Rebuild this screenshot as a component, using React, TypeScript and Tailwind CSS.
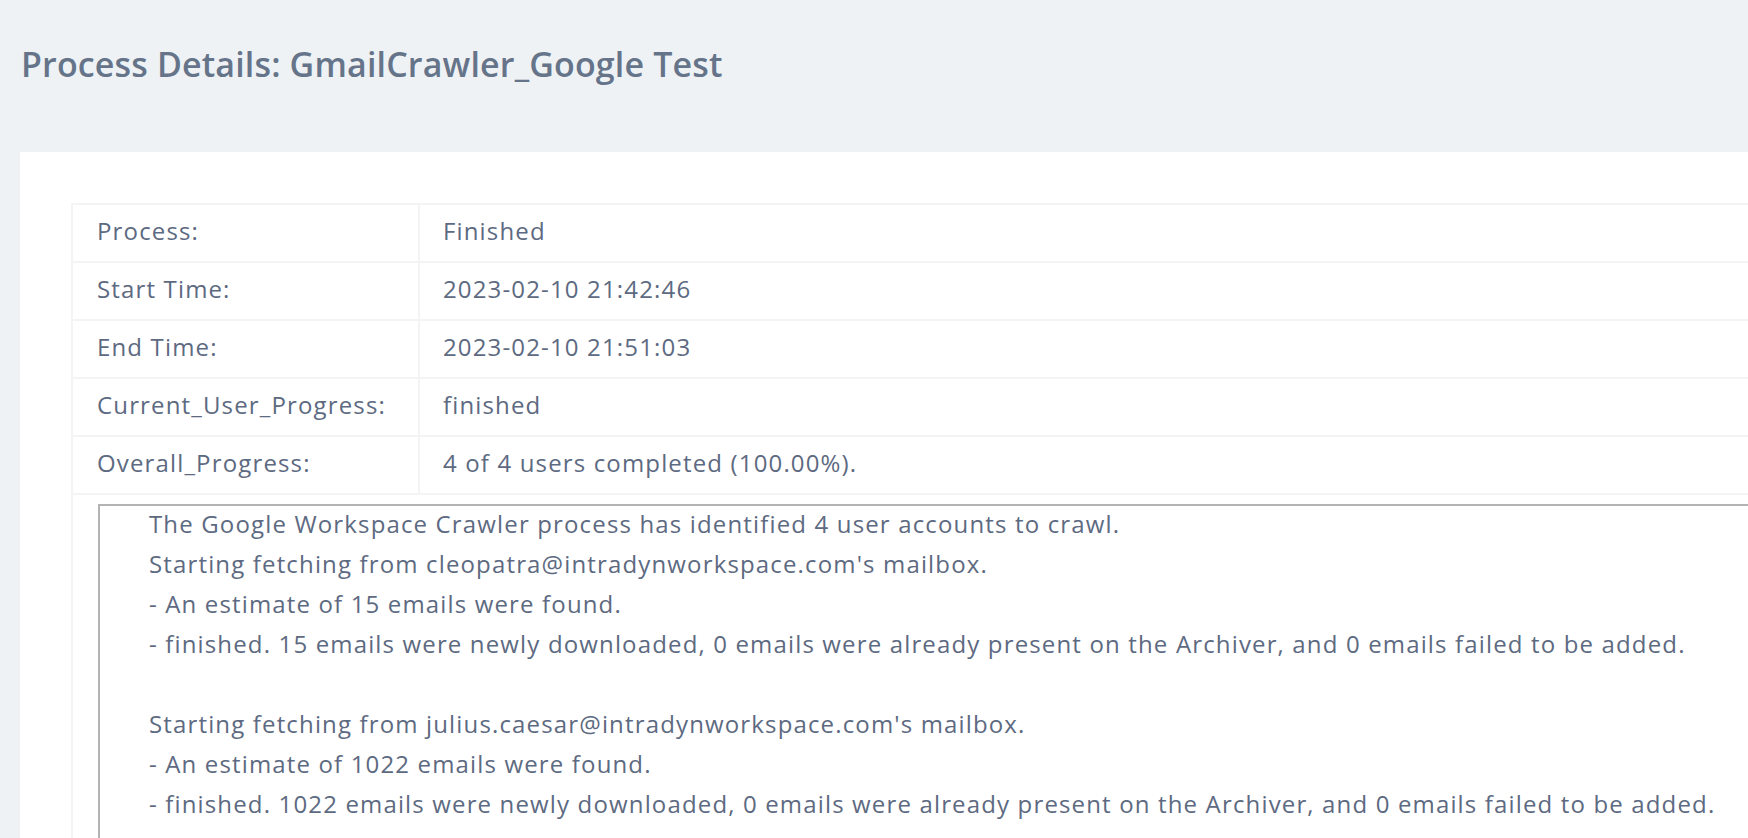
import React from "react";

const rows: { label: string; value: string }[] = [
  { label: "Process:", value: "Finished" },
  { label: "Start Time:", value: "2023-02-10 21:42:46" },
  { label: "End Time:", value: "2023-02-10 21:51:03" },
  { label: "Current_User_Progress:", value: "finished" },
  { label: "Overall_Progress:", value: "4 of 4 users completed (100.00%)." },
];

const logLines = [
  "The Google Workspace Crawler process has identified 4 user accounts to crawl.",
  "Starting fetching from cleopatra@intradynworkspace.com's mailbox.",
  "- An estimate of 15 emails were found.",
  "- finished. 15 emails were newly downloaded, 0 emails were already present on the Archiver, and 0 emails failed to be added.",
  "",
  "Starting fetching from julius.caesar@intradynworkspace.com's mailbox.",
  "- An estimate of 1022 emails were found.",
  "- finished. 1022 emails were newly downloaded, 0 emails were already present on the Archiver, and 0 emails failed to be added.",
  "",
];

const App: React.FC = () => {
  return (
    <div className="h-[838px] w-full overflow-hidden bg-[#eef2f5] font-['Open_Sans',sans-serif] text-[#5d6a81]">
      {/* Page header */}
      <h1 className="pl-[21px] pt-[42px] text-[34px] font-semibold leading-[44px] tracking-[0.15px] text-[#66748a]">
        Process Details: GmailCrawler_Google Test
      </h1>

      {/* Details card */}
      <div className="ml-5 mt-[66px] w-[1800px] bg-white pl-[51px] pt-[51px]">
        <table className="w-[1760px] border-collapse text-[24px] tracking-[1.15px]">
          <tbody>
            {rows.map((row) => (
              <tr key={row.label} className="h-[58px]">
                <td className="w-[347px] border-2 border-[#f4f4f4] pb-[4px] pl-[24px] align-middle">{row.label}</td>
                <td className="border-2 border-[#f4f4f4] pb-[4px] pl-[23px] align-middle">{row.value}</td>
              </tr>
            ))}
            <tr>
              <td colSpan={2} className="border-2 border-[#f4f4f4] pl-[25px] pt-[9px]">
                {/* Log output box */}
                <div className="h-[400px] border-2 border-[#b3b3b3] pl-[49px]">
                  {logLines.map((line, i) => (
                    <div key={i} className="h-[40px] whitespace-nowrap leading-[36px]">
                      {line}
                    </div>
                  ))}
                </div>
              </td>
            </tr>
          </tbody>
        </table>
      </div>
    </div>
  );
};

export default App;
